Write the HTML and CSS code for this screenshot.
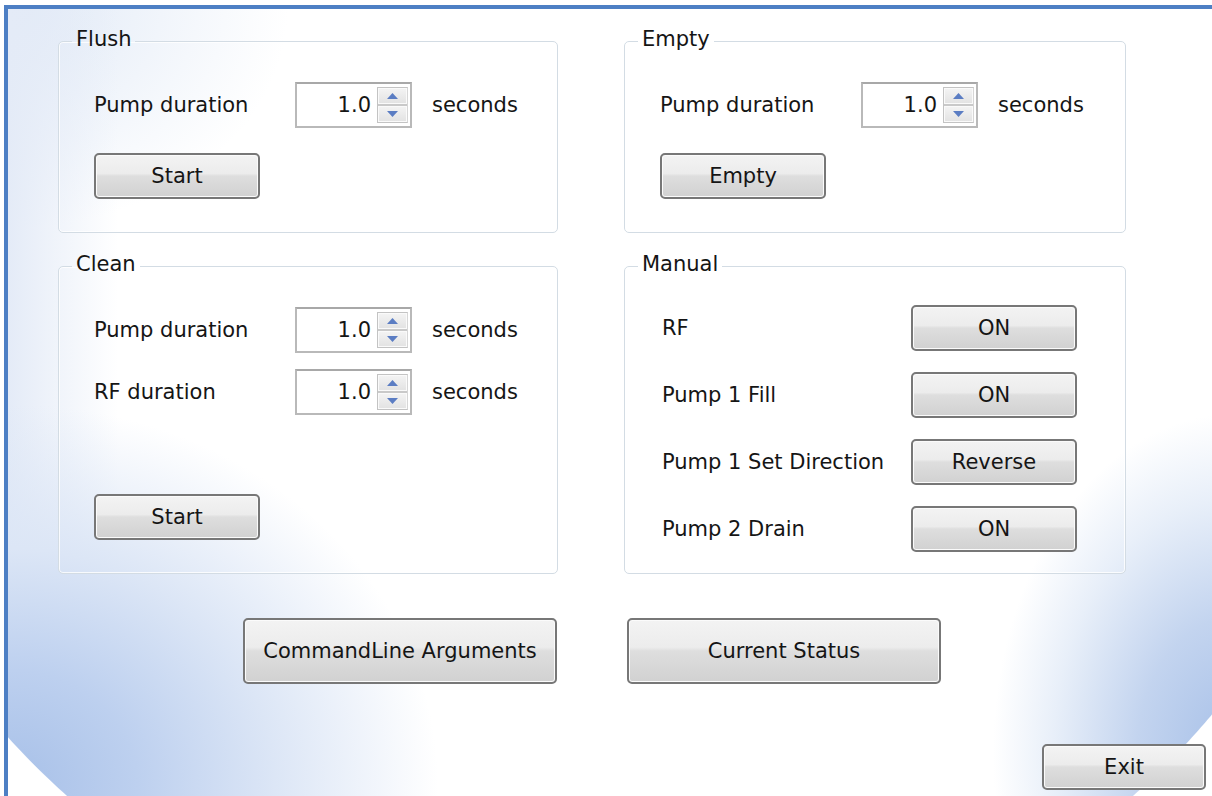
FILE: index.html
```html
<!DOCTYPE html>
<html lang="en">
<head>
<meta charset="utf-8">
<title>Pump Control</title>
<link rel="stylesheet" href="styles.css">
</head>
<body>
<div class="window">
  <div class="groups">
    <fieldset class="group">
      <legend>Flush</legend>
      <div class="group-body">
        <div class="fields">
          <div class="field-row">
            <span class="label">Pump duration</span>
            <div class="spin">
              <span class="spin-value">1.0</span>
              <span class="spin-arrows">
                <span class="arrow"><svg width="11" height="6" viewBox="0 0 11 6"><polygon points="0,6 5.5,0 11,6"/></svg></span>
                <span class="arrow"><svg width="11" height="6" viewBox="0 0 11 6"><polygon points="0,0 5.5,6 11,0"/></svg></span>
              </span>
            </div>
            <span class="unit">seconds</span>
          </div>
        </div>
        <button class="btn btn-small">Start</button>
      </div>
    </fieldset>

    <fieldset class="group">
      <legend>Empty</legend>
      <div class="group-body">
        <div class="fields">
          <div class="field-row">
            <span class="label">Pump duration</span>
            <div class="spin">
              <span class="spin-value">1.0</span>
              <span class="spin-arrows">
                <span class="arrow"><svg width="11" height="6" viewBox="0 0 11 6"><polygon points="0,6 5.5,0 11,6"/></svg></span>
                <span class="arrow"><svg width="11" height="6" viewBox="0 0 11 6"><polygon points="0,0 5.5,6 11,0"/></svg></span>
              </span>
            </div>
            <span class="unit">seconds</span>
          </div>
        </div>
        <button class="btn btn-small">Empty</button>
      </div>
    </fieldset>

    <fieldset class="group">
      <legend>Clean</legend>
      <div class="group-body">
        <div class="fields">
          <div class="field-row">
            <span class="label">Pump duration</span>
            <div class="spin">
              <span class="spin-value">1.0</span>
              <span class="spin-arrows">
                <span class="arrow"><svg width="11" height="6" viewBox="0 0 11 6"><polygon points="0,6 5.5,0 11,6"/></svg></span>
                <span class="arrow"><svg width="11" height="6" viewBox="0 0 11 6"><polygon points="0,0 5.5,6 11,0"/></svg></span>
              </span>
            </div>
            <span class="unit">seconds</span>
          </div>
          <div class="field-row">
            <span class="label">RF duration</span>
            <div class="spin">
              <span class="spin-value">1.0</span>
              <span class="spin-arrows">
                <span class="arrow"><svg width="11" height="6" viewBox="0 0 11 6"><polygon points="0,6 5.5,0 11,6"/></svg></span>
                <span class="arrow"><svg width="11" height="6" viewBox="0 0 11 6"><polygon points="0,0 5.5,6 11,0"/></svg></span>
              </span>
            </div>
            <span class="unit">seconds</span>
          </div>
        </div>
        <button class="btn btn-small">Start</button>
      </div>
    </fieldset>

    <fieldset class="group">
      <legend>Manual</legend>
      <div class="group-body manual">
        <div class="toggles">
          <span class="label">RF</span>
          <button class="btn btn-small">ON</button>
          <span class="label">Pump 1 Fill</span>
          <button class="btn btn-small">ON</button>
          <span class="label">Pump 1 Set Direction</span>
          <button class="btn btn-small">Reverse</button>
          <span class="label">Pump 2 Drain</span>
          <button class="btn btn-small">ON</button>
        </div>
      </div>
    </fieldset>
  </div>

  <div class="actions">
    <button class="btn btn-wide">CommandLine Arguments</button>
    <button class="btn btn-wide">Current Status</button>
  </div>

  <div class="footer">
    <button class="btn btn-exit">Exit</button>
  </div>
</div>
</body>
</html>
```

FILE: styles.css
```css
html, body {
  margin: 0;
  height: 100%;
}

body {
  background: #ffffff;
  padding: 5px 0 0 4px;
  box-sizing: border-box;
  overflow: hidden;
  font-family: "DejaVu Sans", "Liberation Sans", sans-serif;
  font-size: 21px;
  color: #151515;
}

/* dialog frame; the blue sweeps fade in from the lower corners
   and are cut off by one large arc */
.window {
  height: 100%;
  box-sizing: border-box;
  border-top: 4px solid #4d7fc4;
  border-left: 4px solid #4d7fc4;
  padding: 20px 6px 0 50px;
  display: flex;
  flex-direction: column;
  background:
    radial-gradient(circle 800px at 592px 191px,
      rgba(255, 255, 255, 0) 799px, #ffffff 800px),
    radial-gradient(ellipse 430px 380px at 0 775px,
      #a7c0e8 0, #bdd0ef 30%, #dce6f6 62%, rgba(255, 255, 255, 0) 100%),
    radial-gradient(ellipse 240px 340px at 1225px 745px,
      #a7c0e8 0, #c3d4ef 40%, #e8eff9 75%, rgba(255, 255, 255, 0) 100%),
    linear-gradient(to right, #e4ebf7 0, rgba(255, 255, 255, 0) 110px),
    radial-gradient(ellipse 280px 220px at 0 0, #e0e9f6 0, rgba(255, 255, 255, 0) 100%),
    #ffffff;
}

.groups {
  display: grid;
  grid-template-columns: 500px 502px;
  grid-template-rows: 204px 320px;
  column-gap: 66px;
  row-gap: 21px;
  width: 1068px;
}

/* group boxes */
.group {
  margin: 0;
  padding: 0;
  min-width: 0;
  border: 1px solid #d3dce4;
  border-radius: 5px;
  box-shadow: inset 0 0 0 1px rgba(255, 255, 255, 0.8);
  display: flex;
  flex-direction: column;
}

.group legend {
  margin-left: 13px;
  padding: 0 4px 4px;
  line-height: 20px;
  font-size: 21px;
  color: #151515;
}

.group-body {
  flex: 1;
  display: flex;
  flex-direction: column;
  align-items: flex-start;
  padding: 29px 0 33px 35px;
}

.group-body .btn {
  margin-top: auto;
}

.fields {
  display: grid;
  row-gap: 16px;
}

.field-row {
  display: grid;
  grid-template-columns: 201px 117px auto;
  align-items: center;
}

.label {
  white-space: nowrap;
}

.unit {
  padding-left: 20px;
}

/* spin box */
.spin {
  height: 46px;
  box-sizing: border-box;
  border: 2px solid #b9b9b9;
  border-top-color: #a8a8a8;
  background: #ffffff;
  display: flex;
  align-items: center;
}

.spin-value {
  flex: 1;
  text-align: right;
  padding-right: 6px;
}

.spin-arrows {
  align-self: stretch;
  width: 31px;
  margin: 3px 2px 3px 0;
  box-sizing: border-box;
  border: 1px solid #c3c3c3;
  border-right-color: #d6d6d6;
  display: flex;
  flex-direction: column;
  background: #e9e9e9;
}

.arrow {
  flex: 1;
  display: flex;
  align-items: center;
  justify-content: center;
  background: linear-gradient(#f4f4f4, #e2e2e2);
  box-shadow: inset 0 0 0 1px #fafafa;
}

.arrow + .arrow {
  border-top: 2px solid #c9c9c9;
}

.arrow svg {
  display: block;
  fill: #5b7dc3;
}

/* push buttons */
.btn {
  font-family: "DejaVu Sans", "Liberation Sans", sans-serif;
  font-size: 21px;
  color: #151515;
  padding: 0;
  box-sizing: border-box;
  border: 2px solid #777777;
  border-radius: 5px;
  background: linear-gradient(#f3f3f3 0%, #ececec 44%, #dedede 50%, #d1d1d1 100%);
  box-shadow: inset 0 0 0 1px #fbfbfb;
  cursor: default;
}

.btn-small {
  width: 166px;
  height: 46px;
}

.manual {
  padding-top: 27px;
  padding-left: 37px;
}

.toggles {
  display: grid;
  grid-template-columns: 249px 166px;
  row-gap: 21px;
  align-items: center;
}

.toggles .btn {
  margin-top: 0;
}

.actions {
  width: 1068px;
  display: flex;
  justify-content: center;
  gap: 70px;
  margin-top: 44px;
}

.btn-wide {
  width: 314px;
  height: 66px;
}

.footer {
  display: flex;
  justify-content: flex-end;
  margin-top: 60px;
}

.btn-exit {
  width: 164px;
  height: 46px;
}
```
